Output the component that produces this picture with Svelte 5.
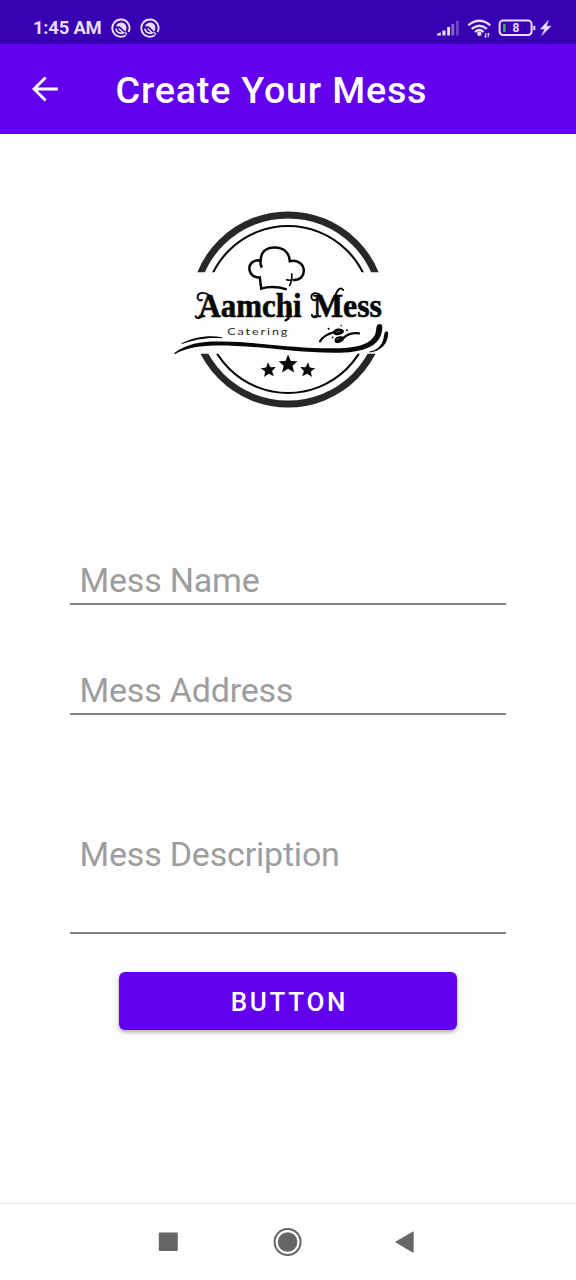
<script>
  let name = $state('');
  let address = $state('');
  let description = $state('');
  const star = 'M0-9.6 2.7-3.3 9.4-3 4.4 1.5 6 8.2 0 4.6-6 8.2-4.4 1.5-9.4-3-2.7-3.3Z';
</script>

<div class="screen">
  <div class="status">
    <span class="time">1:45 AM</span>
    {#each [0, 1] as i (i)}
      <svg class="app" width="20" height="20" viewBox="0 0 20 20" fill="none" stroke="#e9dcfb">
        <path d="M14.8 17.2A8.6 8.6 0 1 1 17.6 14" stroke-width="1.9" />
        <path d="M4.9 10.6C5.4 13.4 7.2 15 9.6 15.2L12.6 15.2" stroke-width="1.7" />
        <path d="M5 8.2C6.8 3.6 13 3.2 14.9 7.4 15.8 9.6 15.4 11.8 14.2 13.4L9 8.4Z" fill="#e9dcfb" stroke="none" />
        <path d="M7.6 10.4 12.6 15M13.6 14 16 16.4" stroke-width="1.4" />
      </svg>
    {/each}
    <svg class="signals" width="120" height="24" viewBox="434 16 120 24" fill="none" stroke="#e9dcfb">
      <g fill="#e9dcfb" stroke="none">
        <path d="M437 35.5v-1.5l3.8-1.8v3.3ZM442.4 35.5v-5h3.1v5ZM447.2 35.5v-8.6h2.8v8.6Z" />
        <path opacity=".48" d="M451.4 35.5V23.8h2.8v11.7Z" />
        <path opacity=".3" d="M456 35.5V20.8h2.8v14.7Z" />
        <circle cx="479.3" cy="33.8" r="2.2" />
        <path d="M548.4 20.2 540.5 29h4.2l-2.9 6.5 9.2-9.3h-4.6Z" stroke="#e9dcfb" stroke-width=".5" />
      </g>
      <path stroke-width="2.3" d="M468.3 25.3Q479.3 16.3 490.3 25.3M471.7 28.9Q479.3 22.5 486.9 28.9M475 32Q479.3 28.1 483.6 32" />
      <path stroke-width="1.1" d="M485.8 33v4.3m-1.2-1.4 1.2 1.4M488.2 37.3V33m1.2 1.4L488.2 33" />
      <rect x="499.6" y="20.6" width="32" height="14.4" rx="3.4" stroke-width="2" />
      <path stroke-width="2" d="M534.3 25.8v4.4" />
      <path stroke="#4fa45c" stroke-width="2.6" d="M504.4 24v8" />
      <text x="516" y="32.3" text-anchor="middle" class="charge">8</text>
    </svg>
  </div>

  <header>
    <svg width="30" height="30" viewBox="0 0 30 30" fill="none" stroke="#fff" stroke-width="2.8">
      <path d="M27.8 15H4M15.6 3.4 4 15l11.6 11.6" />
    </svg>
    <h1>Create Your Mess</h1>
  </header>

  <main>
    <svg class="logo" width="236" height="216" viewBox="164 200 236 216" fill="none" stroke="#080808">
      <defs>
        <clipPath id="halves"><path d="M164 200h236v72.3H164ZM164 353.8h236V416H164Z" /></clipPath>
      </defs>
      <g clip-path="url(#halves)">
        <circle cx="288" cy="309.5" r="94.6" stroke="#282828" stroke-width="7" />
        <circle cx="288" cy="309.5" r="83.5" stroke-width="2.1" />
      </g>
      <path stroke-width="2.5" d="M261.8 267.6C260.4 264.6 260 262.4 260.6 260.2 253 259.6 249 264 249.4 269.2 249.8 274.6 254.4 277.8 259.8 277.4L261.2 288.6C269 286.4 277.5 286.6 286.8 289.4" />
      <path stroke-width="2.5" d="M260.8 261.5C260.2 252 266 247.4 274.5 247.4 283 247.4 289.4 252 289.8 261.2 297.6 259.6 303.4 264 303.8 270 304.2 276 300 280.3 293.4 280" />
      <path stroke-width="1.6" d="M286 279.4c3.3 1.4 5.4 1.2 9.6.1M291.8 273.2c.3 5.3 0 8.4-2.4 13" />
      <text class="brand" y="317"><tspan x="198.5" textLength="103" lengthAdjust="spacingAndGlyphs">Aamchi</tspan> <tspan x="313" textLength="69" lengthAdjust="spacingAndGlyphs">Mess</tspan></text>
      <g stroke-width="1.9" stroke-linecap="round">
        <path d="M210 296C206 292 199.5 291.8 197.8 295.6 196.6 299 199.6 301.6 202 299.8M203 315.4C200.6 318.4 196.4 319 195.6 316.2" />
        <path d="M321 296C317.6 291.8 312.4 292.6 311.4 296 310.8 299.4 313.6 301.4 316.2 299.4M318 315.4C315.6 318.4 312 317.6 311.9 314.8" />
        <path d="M335.2 296.5C336.4 291.4 339.6 285.8 343.2 290" />
        <path stroke-width="2.2" d="M290.6 309C291.2 314.6 289.4 318.6 285.4 320.4" />
      </g>
      <text class="tagline" transform="translate(227.3 335) scale(1.25 1)" textLength="48" lengthAdjust="spacing">Catering</text>
      <g fill="#080808" stroke="none">
        <path d="M174 353.3C187 343.4 202 341.3 222 341.6 260 342.2 284 347.2 322 348.2 349 349 370 347.4 375.5 333.5L376.5 327C377 323 382.6 323 382.3 327.5 381.8 344 368 352.2 340 352.7 302 353.4 274 347.6 236 346 208 344.8 190 346 175 354Z" />
        <path d="M181.5 343.2C194 337 209 334.6 222.2 337.3L221.8 338.2C207 337 196 339.3 181.7 344Z" />
        <path d="M369.5 351.6C379 349.8 383.2 343.5 384.2 334.4 384.8 330.5 388 330.2 388.2 333.5 387.8 344 381 351 369.5 352.5Z" />
        <ellipse cx="338.4" cy="331.8" rx="5.6" ry="3.3" transform="rotate(-8 338.4 331.8)" />
        <path d="M334.6 340c.4-3 4.4-4.4 8.6-3.2l1.5 1.4c-2 4.4-8.6 6.4-10.1 3.6Z" />
        <circle cx="328.6" cy="328.7" r="1" /><circle cx="341.2" cy="325.8" r=".8" />
        <circle cx="347" cy="330.3" r="1" /><circle cx="332.6" cy="337.4" r=".9" />
        <path transform="translate(288.1 364.2)" d={star} />
        <path transform="translate(268.5 370) rotate(-4) scale(.8)" d={star} />
        <path transform="translate(307.5 370) rotate(4) scale(.8)" d={star} />
      </g>
      <g stroke-linecap="round">
        <path stroke-width="2.3" d="M320 341.3C323 336.5 327 334.2 333 332.5" />
        <path stroke-width="2.2" d="M344 337.4C348 334 353 332.7 359 333.4" />
        <path stroke="#bbb" stroke-width=".5" d="M336.5 332l3.4-.9M336.5 340l2.6-1.8" />
      </g>
    </svg>

    <form onsubmit={(e) => e.preventDefault()}>
      <input aria-label="Mess Name" placeholder="Mess Name" bind:value={name} />
      <input aria-label="Mess Address" placeholder="Mess Address" bind:value={address} />
      <input class="tall" aria-label="Mess Description" placeholder="Mess Description" bind:value={description} />
      <button>BUTTON</button>
    </form>
  </main>

  <nav>
    <svg width="576" height="76" viewBox="0 1204 576 76" fill="#666">
      <rect x="158.8" y="1232.6" width="19" height="18.4" rx="1" />
      <circle cx="287.6" cy="1242" r="13" fill="none" stroke="#666" stroke-width="2" />
      <circle cx="287.6" cy="1242" r="9.8" />
      <path d="M395.6 1242 413.2 1231.8V1252.4Z" stroke="#666" stroke-width=".8" stroke-linejoin="round" />
    </svg>
  </nav>
</div>

<style>
  :global(body) { margin: 0; background: #fff; }
  .screen {
    display: flex;
    flex-direction: column;
    width: 576px;
    height: 1280px;
    background: #fefefe;
    font-family: Roboto, sans-serif;
    overflow: hidden;
  }
  .status {
    display: flex;
    align-items: center;
    box-sizing: border-box;
    height: 44px;
    padding: 11px 22px 0 33px;
    background: #3700b3;
    flex: none;
  }
  .time {
    width: 69px;
    margin-right: 9px;
    color: #e9dcfb;
    font-size: 18.5px;
    font-weight: 700;
    letter-spacing: -.25px;
    line-height: 24px;
    white-space: nowrap;
  }
  .app { margin-right: 9px; }
  .signals { margin-left: auto; }
  .charge { font: 700 12px Roboto, sans-serif; fill: #e9dcfb; stroke: none; }
  header {
    display: flex;
    align-items: center;
    height: 89.5px;
    padding: 0 30px;
    background: #6200ee;
    flex: none;
  }
  h1 {
    margin: 2px 0 0 55.5px;
    color: #fff;
    font-size: 37.7px;
    font-weight: 500;
    letter-spacing: .8px;
    white-space: nowrap;
  }
  main {
    display: flex;
    flex-direction: column;
    align-items: center;
    flex: 1;
    padding-top: 66.5px;
  }
  .logo { margin-right: 12px; flex: none; }
  .brand { font: 700 33px "Liberation Serif", serif; fill: #080808; stroke: #080808; stroke-width: .6px; }
  .tagline { font: 400 10px Lato, sans-serif; fill: #222; stroke: none; }
  form {
    display: flex;
    flex-direction: column;
    align-items: center;
    width: 436px;
    margin-top: 139px;
  }
  input {
    box-sizing: border-box;
    width: 436px;
    height: 50px;
    padding: 1px 9.5px 0;
    margin: 0 0 60px;
    border: 0;
    border-bottom: 2px solid #838383;
    border-radius: 0;
    background: none;
    color: #222;
    font: 400 34px Roboto, sans-serif;
    letter-spacing: -.2px;
    outline: none;
  }
  input::placeholder { color: #9d9d9d; opacity: 1; }
  .tall { height: 159px; margin-bottom: 38px; }
  button {
    width: 338px;
    height: 57.5px;
    padding: 2px 0 0 3px;
    border: 0;
    border-radius: 6px;
    background: #6200ee;
    box-shadow: 0 2px 4px rgb(0 0 0 / .35);
    color: #fff;
    font: 500 26px Roboto, sans-serif;
    letter-spacing: 2.7px;
  }
  nav { height: 76px; border-top: 1px solid #e2e2e2; flex: none; }
  nav svg { display: block; }
</style>
